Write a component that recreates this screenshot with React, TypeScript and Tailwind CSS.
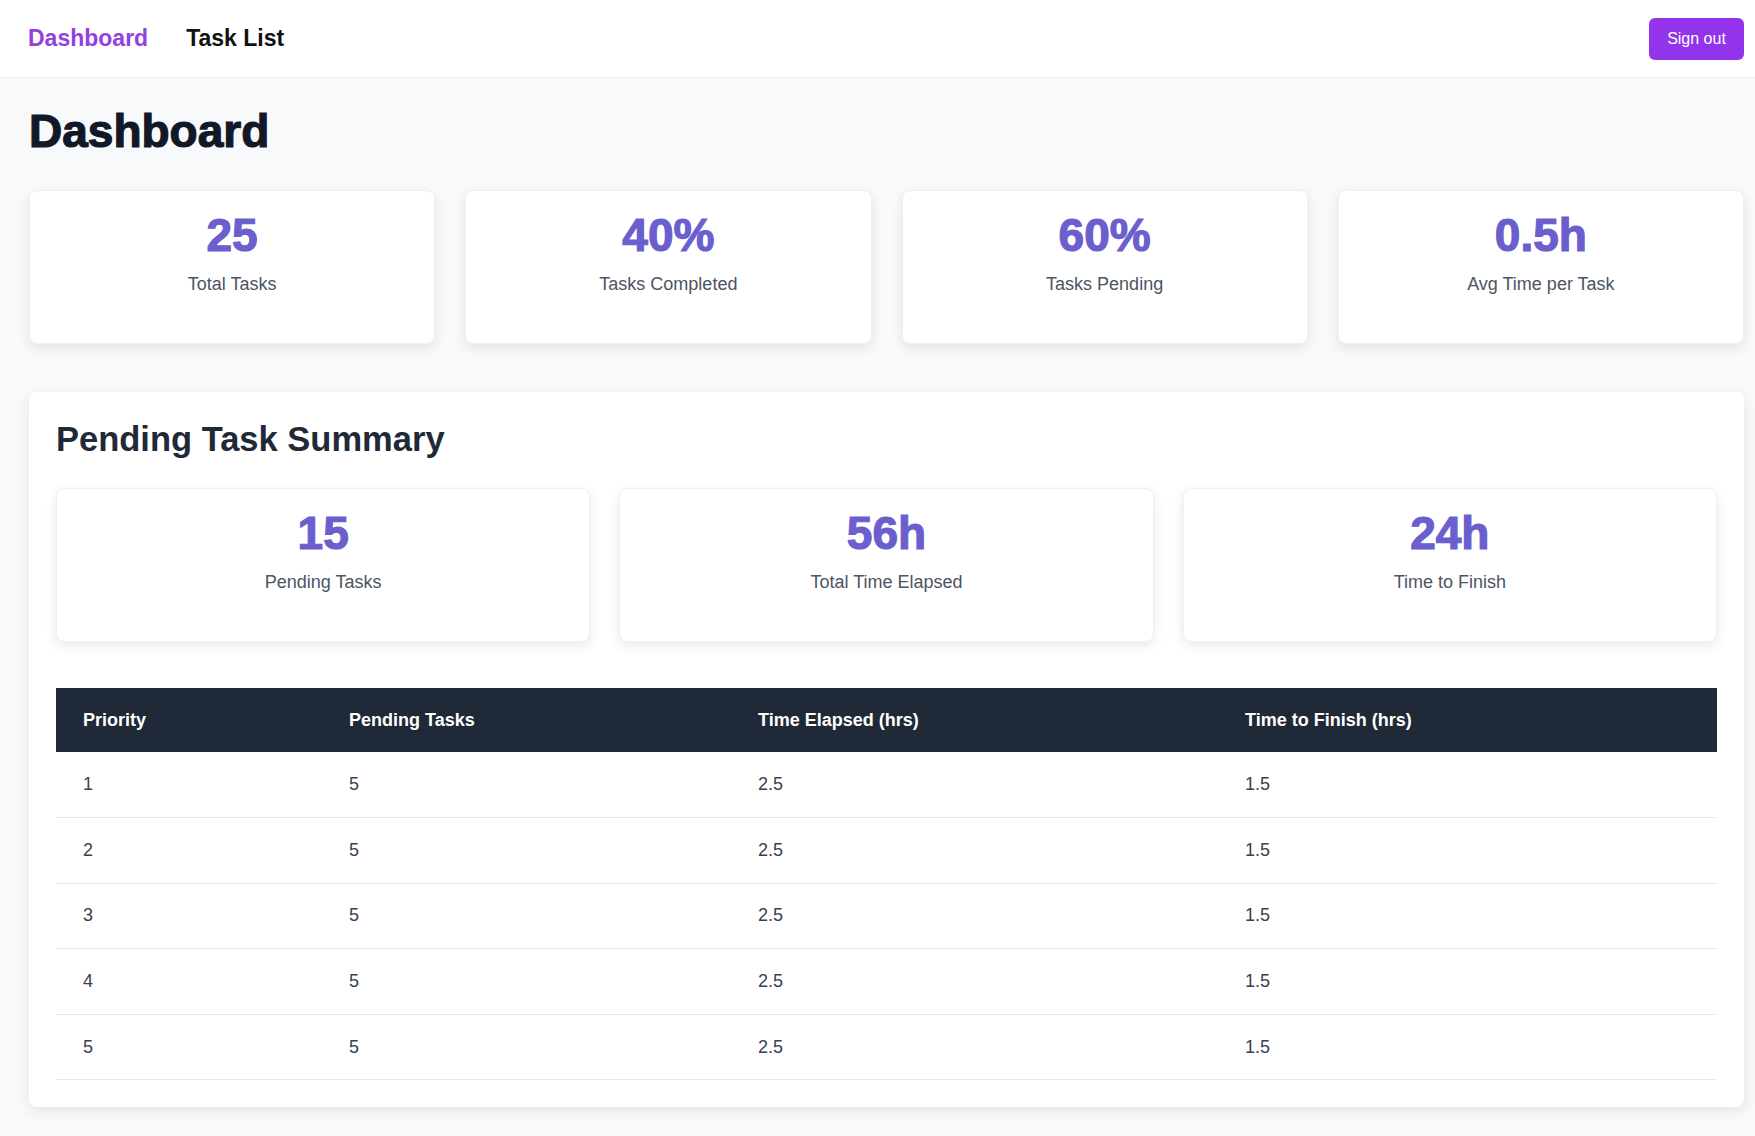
import { useState } from "react";

type Stat = { value: string; label: string };

const TOP_STATS: Stat[] = [
  { value: "25", label: "Total Tasks" },
  { value: "40%", label: "Tasks Completed" },
  { value: "60%", label: "Tasks Pending" },
  { value: "0.5h", label: "Avg Time per Task" },
];

const PENDING_STATS: Stat[] = [
  { value: "15", label: "Pending Tasks" },
  { value: "56h", label: "Total Time Elapsed" },
  { value: "24h", label: "Time to Finish" },
];

const ROWS = [1, 2, 3, 4, 5].map((priority) => ({
  priority,
  pending: 5,
  elapsed: "2.5",
  finish: "1.5",
}));

function StatCard({ stat }: { stat: Stat }) {
  return (
    <div className="h-[154px] rounded-lg border border-[#eef0f3] bg-white pt-[16px] text-center shadow-[0_4px_12px_rgba(0,0,0,0.09)]">
      <div className="text-[46px] font-bold leading-[56px] text-[#6a5fcd] [-webkit-text-stroke:1.2px_#6a5fcd]">
        {stat.value}
      </div>
      <div className="mt-[7px] text-[18px] leading-[28px] text-[#4b5563]">{stat.label}</div>
    </div>
  );
}

export default function App() {
  const [active, setActive] = useState<"dashboard" | "tasks">("dashboard");

  return (
    <div className="min-h-screen bg-[#f8f9fb] font-['Liberation_Sans',Arial,sans-serif]">
      <nav className="flex h-[78px] items-center justify-between border-b border-[#eceef1] bg-white pl-[28px] pr-[11px]">
        <div className="flex items-center gap-[38px] text-[23px] font-bold">
          <button
            onClick={() => setActive("dashboard")}
            className={active === "dashboard" ? "text-[#9340dc]" : "text-[#111111]"}
          >
            Dashboard
          </button>
          <button
            onClick={() => setActive("tasks")}
            className={active === "tasks" ? "text-[#9340dc]" : "text-[#111111]"}
          >
            Task List
          </button>
        </div>
        <button className="h-[42px] w-[95px] rounded-md bg-[#9333ea] text-[16px] text-white">Sign out</button>
      </nav>

      <main className="pb-[27px] pl-[29px] pr-[11px] pt-[27px]">
        <h1 className="text-[46px] font-bold leading-[52px] text-[#111827] [-webkit-text-stroke:1.2px_#111827]">
          Dashboard
        </h1>

        <div className="mt-[33px] grid grid-cols-4 gap-[30px]">
          {TOP_STATS.map((s) => (
            <StatCard key={s.label} stat={s} />
          ))}
        </div>

        <section className="mt-[48px] rounded-lg bg-white p-[27px] shadow-[0_4px_14px_rgba(0,0,0,0.09)]">
          <h2 className="text-[34.5px] font-bold leading-[40px] text-[#1f2937]">Pending Task Summary</h2>

          <div className="mt-[29px] grid grid-cols-3 gap-[29px]">
            {PENDING_STATS.map((s) => (
              <StatCard key={s.label} stat={s} />
            ))}
          </div>

          <table className="mt-[46px] w-full border-collapse text-left">
            <colgroup>
              <col className="w-[266px]" />
              <col className="w-[409px]" />
              <col className="w-[487px]" />
              <col />
            </colgroup>
            <thead>
              <tr className="bg-[#1f2937]">
                <th className="h-[64px] px-[27px] text-[18px] font-bold text-white">Priority</th>
                <th className="h-[64px] px-[27px] text-[18px] font-bold text-white">Pending Tasks</th>
                <th className="h-[64px] px-[27px] text-[18px] font-bold text-white">Time Elapsed (hrs)</th>
                <th className="h-[64px] px-[27px] text-[18px] font-bold text-white">Time to Finish (hrs)</th>
              </tr>
            </thead>
            <tbody>
              {ROWS.map((r) => (
                <tr key={r.priority} className="border-b border-[#e8eaed]">
                  <td className="h-[65.6px] px-[27px] text-[18px] text-[#374151]">{r.priority}</td>
                  <td className="h-[65.6px] px-[27px] text-[18px] text-[#374151]">{r.pending}</td>
                  <td className="h-[65.6px] px-[27px] text-[18px] text-[#374151]">{r.elapsed}</td>
                  <td className="h-[65.6px] px-[27px] text-[18px] text-[#374151]">{r.finish}</td>
                </tr>
              ))}
            </tbody>
          </table>
        </section>
      </main>
    </div>
  );
}
